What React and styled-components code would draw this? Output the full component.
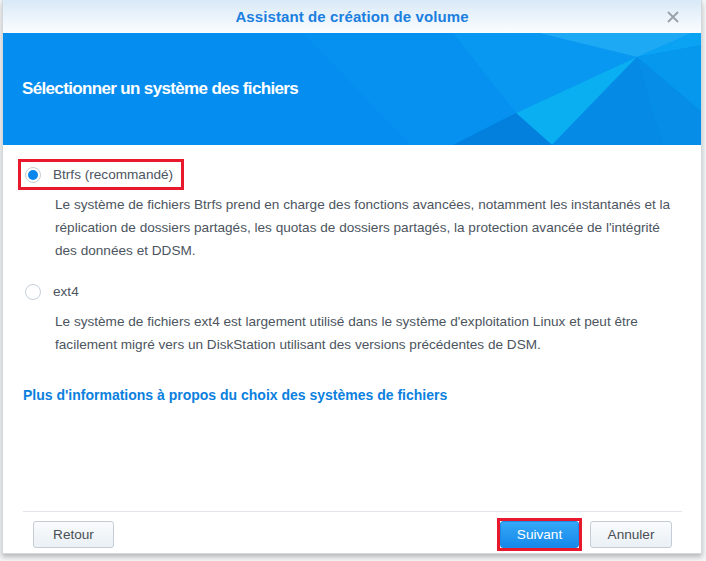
import React from "react";
import styled, { createGlobalStyle } from "styled-components";

const GlobalStyle = createGlobalStyle`
  html, body {
    margin: 0;
    padding: 0;
    background: #f4f5f6;
    font-family: "Liberation Sans", Arial, sans-serif;
  }
`;

const Page = styled.div`
  width: 706px;
  height: 561px;
  position: relative;
  overflow: hidden;
  padding-left: 2px;
  box-sizing: border-box;
`;

const Dialog = styled.div`
  width: 700px;
  height: 554px;
  background: #fff;
  border: 1px solid #d3d8dd;
  border-top: none;
  box-sizing: border-box;
  box-shadow: 0 3px 5px rgba(0, 0, 0, 0.25);
  display: flex;
  flex-direction: column;
`;

const TitleBar = styled.div`
  height: 33px;
  flex-shrink: 0;
  background: linear-gradient(#d9e9f7, #fbfdff);
  display: flex;
  align-items: center;
  justify-content: center;
  position: relative;
`;

const TitleText = styled.div`
  font-size: 15px;
  font-weight: bold;
  color: #1b7fe0;
  letter-spacing: 0.1px;
`;

const CloseBtn = styled.div`
  position: absolute;
  right: 22px;
  top: 11px;
  width: 12px;
  height: 12px;
  display: flex;
`;

const Banner = styled.div`
  height: 112px;
  flex-shrink: 0;
  background: #058ef0;
  position: relative;
  overflow: hidden;
  display: flex;
  align-items: center;
  padding-left: 19px;
`;

const BannerArt = styled.svg`
  position: absolute;
  left: 0;
  top: 0;
`;

const BannerTitle = styled.h1`
  position: relative;
  margin: 0;
  font-size: 17px;
  font-weight: bold;
  color: #fff;
  letter-spacing: -0.65px;
`;

const Body = styled.div`
  flex: 1;
  padding: 14px 20px 0 15px;
  display: flex;
  flex-direction: column;
`;

const Option = styled.div`
  display: flex;
  flex-direction: column;
  margin-bottom: ${(p) => p.$gap}px;
`;

const OptionRow = styled.label`
  align-self: flex-start;
  display: flex;
  align-items: center;
  gap: 12px;
  height: 25px;
  padding: 0 8px 0 4px;
  border: 3px solid ${(p) => (p.$marked ? "#e8192c" : "transparent")};
  font-size: 13.6px;
  color: #4c5560;
`;

const Radio = styled.span`
  width: 16px;
  height: 16px;
  box-sizing: border-box;
  border-radius: 50%;
  border: 1px solid #c6cfd8;
  background: #fff;
  display: flex;
  align-items: center;
  justify-content: center;
  &::after {
    content: "";
    width: 10px;
    height: 10px;
    border-radius: 50%;
    background: ${(p) => (p.$checked ? "#0a86ec" : "transparent")};
  }
`;

const Desc = styled.p`
  margin: 3px 0 0 37px;
  font-size: 13.6px;
  line-height: 23px;
  color: #4c5560;
  white-space: nowrap;
`;

const MoreLink = styled.a`
  margin-left: 5px;
  font-size: 14px;
  line-height: 23px;
  font-weight: bold;
  color: #0b80de;
  text-decoration: none;
  margin-top: -1px;
`;

const Footer = styled.div`
  margin: 0 19px 0 20px;
  border-top: 1px solid #e3e7eb;
  padding: 9px 10px 5px 10px;
  display: flex;
  align-items: center;
  gap: 8px;
`;

const Spacer = styled.div`
  flex: 1;
`;

const Button = styled.button`
  height: 27px;
  min-width: ${(p) => p.$w}px;
  box-sizing: border-box;
  border-radius: 3px;
  font-family: inherit;
  font-size: 13.6px;
  padding: 0 12px;
  border: 1px solid ${(p) => (p.$primary ? "#1b8ae6" : "#c4cdd6")};
  background: ${(p) =>
    p.$primary
      ? "linear-gradient(#35a8f7, #1589ea)"
      : "linear-gradient(#f9fbfd, #eaf0f5)"};
  color: ${(p) => (p.$primary ? "#fff" : "#4a4f55")};
`;

const Marked = styled.div`
  border: 3px solid #e8192c;
  display: flex;
  margin: -3px 0;
`;

const options = [
  {
    id: "btrfs",
    label: "Btrfs (recommandé)",
    checked: true,
    gap: 14,
    desc: [
      "Le système de fichiers Btrfs prend en charge des fonctions avancées, notamment les instantanés et la",
      "réplication de dossiers partagés, les quotas de dossiers partagés, la protection avancée de l'intégrité",
      "des données et DDSM.",
    ],
  },
  {
    id: "ext4",
    label: "ext4",
    checked: false,
    gap: 29,
    desc: [
      "Le système de fichiers ext4 est largement utilisé dans le système d'exploitation Linux et peut être",
      "facilement migré vers un DiskStation utilisant des versions précédentes de DSM.",
    ],
  },
];

const Facets = () => (
  <BannerArt width="700" height="112" viewBox="0 0 700 112">
    <polygon points="300,0 450,0 513,80 450,112 407,112" fill="#0691f0" />
    <polygon points="450,0 536,0 634,24 513,80" fill="#0898f1" />
    <polygon points="536,0 689,0 634,24" fill="#1ea9f4" />
    <polygon points="689,0 700,0 700,12 634,24" fill="#0aa3f3" />
    <polygon points="634,24 513,80 549,112" fill="#0aaff1" />
    <polygon points="634,24 549,112 660,112" fill="#058ae6" />
    <polygon points="513,80 549,112 450,112" fill="#0380de" />
    <polygon points="634,24 700,12 700,80" fill="#0598ed" />
    <polygon points="634,24 700,80 700,112 660,112" fill="#058de7" />
  </BannerArt>
);

const App = () => {
  return (
    <Page>
      <GlobalStyle />
      <Dialog>
        <TitleBar>
          <TitleText>Assistant de création de volume</TitleText>
          <CloseBtn>
            <svg width="12" height="12" viewBox="0 0 12 12">
              <path d="M1 1 L11 11 M11 1 L1 11" stroke="#9aa0a6" strokeWidth="1.8" />
            </svg>
          </CloseBtn>
        </TitleBar>
        <Banner>
          <Facets />
          <BannerTitle>Sélectionner un système des fichiers</BannerTitle>
        </Banner>
        <Body>
          {options.map((o) => (
            <Option key={o.id} $gap={o.gap}>
              <OptionRow $marked={o.checked}>
                <Radio $checked={o.checked} />
                {o.label}
              </OptionRow>
              <Desc>
                {o.desc.map((line, i) => (
                  <React.Fragment key={i}>
                    {line}
                    <br />
                  </React.Fragment>
                ))}
              </Desc>
            </Option>
          ))}
          <MoreLink href="#">
            Plus d'informations à propos du choix des systèmes de fichiers
          </MoreLink>
        </Body>
        <Footer>
          <Button $w={81}>Retour</Button>
          <Spacer />
          <Marked>
            <Button $primary $w={79}>Suivant</Button>
          </Marked>
          <Button $w={82}>Annuler</Button>
        </Footer>
      </Dialog>
    </Page>
  );
};

export default App;
